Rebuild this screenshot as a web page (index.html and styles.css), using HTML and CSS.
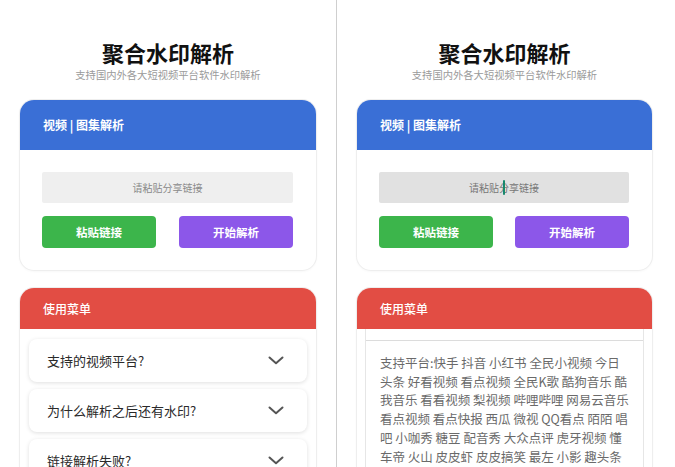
FILE: index.html
```html
<!DOCTYPE html>
<html>
<head>
<meta charset="utf-8">
<title>聚合水印解析</title>
<link rel="stylesheet" href="styles.css">
</head>
<body>
<div class="screen">
  <div class="panel panel-left">
    <header class="hero">
      <h1 class="hero-title">聚合水印解析</h1>
      <p class="hero-sub">支持国内外各大短视频平台软件水印解析</p>
    </header>
    <section class="card">
      <div class="card-head head-blue">视频 | 图集解析</div>
      <div class="card-body">
        <div class="url-input">请粘贴分享链接</div>
        <div class="btn-row">
          <button class="btn btn-green">粘贴链接</button>
          <button class="btn btn-purple">开始解析</button>
        </div>
      </div>
    </section>
    <section class="card card-menu">
      <div class="card-head head-red">使用菜单</div>
      <div class="faq">
        <div class="faq-item"><span>支持的视频平台?</span><svg class="chev" width="16" height="9" viewBox="0 0 16 9"><polyline points="1.5,1.5 8,7.2 14.5,1.5" fill="none" stroke="#555" stroke-width="2" stroke-linecap="round" stroke-linejoin="round"/></svg></div>
        <div class="faq-item"><span>为什么解析之后还有水印?</span><svg class="chev" width="16" height="9" viewBox="0 0 16 9"><polyline points="1.5,1.5 8,7.2 14.5,1.5" fill="none" stroke="#555" stroke-width="2" stroke-linecap="round" stroke-linejoin="round"/></svg></div>
        <div class="faq-item"><span>链接解析失败?</span><svg class="chev" width="16" height="9" viewBox="0 0 16 9"><polyline points="1.5,1.5 8,7.2 14.5,1.5" fill="none" stroke="#555" stroke-width="2" stroke-linecap="round" stroke-linejoin="round"/></svg></div>
      </div>
    </section>
  </div>
  <div class="divider"></div>
  <div class="panel panel-right">
    <header class="hero">
      <h1 class="hero-title">聚合水印解析</h1>
      <p class="hero-sub">支持国内外各大短视频平台软件水印解析</p>
    </header>
    <section class="card">
      <div class="card-head head-blue">视频 | 图集解析</div>
      <div class="card-body">
        <div class="url-input url-focus">请粘贴分享链接<span class="caret"></span></div>
        <div class="btn-row">
          <button class="btn btn-green">粘贴链接</button>
          <button class="btn btn-purple">开始解析</button>
        </div>
      </div>
    </section>
    <section class="card card-menu">
      <div class="card-head head-red">使用菜单</div>
      <div class="faq-open">
        <div class="open-top"></div>
        <p class="open-text">支持平台:快手 抖音 小红书 全民小视频 今日头条 好看视频 看点视频 全民K歌 酷狗音乐 酷我音乐 看看视频 梨视频 哔哩哔哩 网易云音乐 看点视频 看点快报 西瓜 微视 QQ看点 陌陌 唱吧 小咖秀 糖豆 配音秀 大众点评 虎牙视频 懂车帝 火山 皮皮虾 皮皮搞笑 最左 小影 趣头条</p>
      </div>
    </section>
  </div>
</div>
</body>
</html>
```
FILE: styles.css
```css
* { box-sizing: border-box; }
html, body { margin: 0; padding: 0; background: #fff; }
body {
  font-family: "Noto Sans CJK SC", "Noto Sans", sans-serif;
  width: 675px;
  height: 467px;
  overflow: hidden;
}
.screen {
  display: flex;
  width: 675px;
  height: 467px;
  overflow: hidden;
}
.panel {
  display: flex;
  flex-direction: column;
  overflow: hidden;
}
.panel-left { width: 336px; padding: 0 20px; }
.panel-right { width: 338px; padding: 0 23px 0 20px; }
.divider { width: 1px; background: #cfcfcf; flex: none; }

.hero { text-align: center; }
.hero-title {
  margin: 37px 0 0;
  font-size: 22px;
  line-height: 30px;
  font-weight: 700;
  color: #111;
}
.hero-sub {
  margin: 1px 0 0;
  font-size: 10.3px;
  line-height: 14px;
  letter-spacing: 0;
  color: #9a9a9a;
}

.card {
  margin-top: 18px;
  border-radius: 14px;
  background: #fff;
  overflow: hidden;
  box-shadow: 0 0 0 1px #eeeeee, 0 1px 3px rgba(0,0,0,0.06);
  flex: none;
}
.card-head {
  padding-left: 23px;
  color: #fff;
  font-size: 12px;
  font-weight: 700;
}
.head-blue { background: #3a6fd6; height: 50px; line-height: 50px; }
.head-red { background: #e24d44; height: 41px; line-height: 41px; font-weight: 500; }

.card-body { padding: 22px 23px 22px 22px; }
.url-input {
  position: relative;
  height: 31px;
  line-height: 31px;
  background: #efefef;
  text-align: center;
  font-size: 10px;
  color: #8a8a8a;
  border-radius: 2px;
}
.url-focus { background: #e1e1e1; color: #777; }
.caret {
  position: absolute;
  left: 124px;
  top: 8px;
  width: 2px;
  height: 15px;
  background: #17886c;
  border-radius: 1px;
}
.btn-row {
  display: flex;
  justify-content: space-between;
  margin-top: 13px;
}
.btn {
  width: 114px;
  height: 32px;
  border: 0;
  border-radius: 4px;
  color: #fff;
  font-family: inherit;
  font-size: 11.5px;
  font-weight: 700;
  padding: 0;
}
.btn-green { background: #3cb54b; }
.btn-purple { background: #8c57e9; }

.card-menu { flex: 1; border-bottom-left-radius: 0; border-bottom-right-radius: 0; }
.faq { padding: 10px 9px 0; display: flex; flex-direction: column; gap: 7px; }
.faq-item {
  height: 43px;
  display: flex;
  align-items: center;
  justify-content: space-between;
  padding: 0 23px 0 18px;
  border-radius: 8px;
  background: #fff;
  box-shadow: 0 1px 4px rgba(0,0,0,0.13);
  font-size: 13px;
  color: #2a2a2a;
  flex: none;
}
.chev { flex: none; }

.faq-open {
  margin: 0 8px;
  border-left: 1px solid #e6e6e6;
  border-right: 1px solid #e6e6e6;
  height: 200px;
}
.open-top { height: 12px; border-bottom: 1px solid #dcdcdc; }
.open-text {
  margin: 0;
  padding: 13px 12px 0 14px;
  font-size: 12.5px;
  line-height: 18.7px;
  color: #6a6a6a;
}
```
